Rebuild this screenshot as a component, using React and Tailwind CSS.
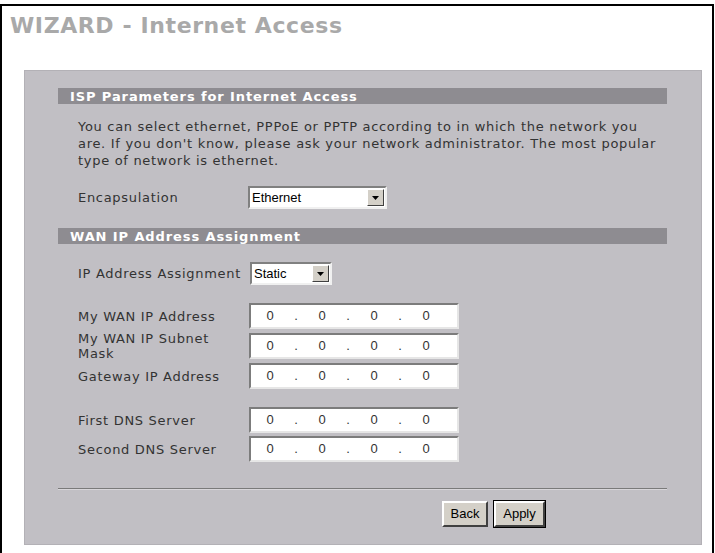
import React from 'react';

const verdana = { fontFamily: '"DejaVu Sans", Verdana, sans-serif' };
const arial = { fontFamily: '"Liberation Sans", Arial, sans-serif' };

function SectionBar({ title }) {
  return (
    <div className="h-[16px] bg-[#8e8c91] pl-[12px] flex items-center text-white font-bold text-[13px] tracking-[0.9px] leading-none">
      {title}
    </div>
  );
}

function FakeSelect({ value, width }) {
  return (
    <div
      className={`${width} h-[23px] bg-white border-2 border-t-[#808080] border-l-[#808080] border-b-[#f0f0f0] border-r-[#f0f0f0] flex items-center justify-between pl-[2px] pr-[1px] tracking-normal`}
      style={arial}
    >
      <span className="text-[13px] text-black leading-none">{value}</span>
      <span className="w-[17px] h-[17px] bg-[#d4d0c8] border border-t-white border-l-white border-b-[#404040] border-r-[#404040] flex items-center justify-center">
        <svg width="7" height="4" viewBox="0 0 7 4">
          <path d="M0 0h7L3.5 4z" fill="#000" />
        </svg>
      </span>
    </div>
  );
}

function IpBox() {
  const cells = ['0', '0', '0', '0'];
  return (
    <div
      className="w-[210px] h-[26px] bg-white border-2 border-t-[#7c7c7c] border-l-[#7c7c7c] border-b-[#e6e6e6] border-r-[#e6e6e6] flex items-center text-[13px] text-[#333] tracking-normal"
      style={arial}
    >
      {cells.map((c, i) => (
        <React.Fragment key={i}>
          <span className="w-[38px] text-center">{c}</span>
          {i < 3 && <span className="w-[14px] text-center">.</span>}
        </React.Fragment>
      ))}
    </div>
  );
}

function IpRow({ children }) {
  return (
    <div className="flex items-center h-[26px]">
      <div className="w-[191px] pl-[20px] pr-[4px] leading-[15px] whitespace-nowrap">{children}</div>
      <IpBox />
    </div>
  );
}

export default function App() {
  return (
    <div className="w-[715px] h-[553px] bg-white overflow-hidden" style={verdana}>
      <div className="mt-[4px] w-[714px] h-[549px] border-2 border-b-0 border-black">
        <h1 className="pl-[8px] pt-[6px] h-[64px] text-[22px] font-bold text-[#a9a9a9] tracking-[0.6px] leading-[28px]">
          WIZARD - Internet Access
        </h1>

        <div className="ml-[22px] w-[678px] h-[475px] bg-[#c1bfc4] border border-[#b3b1b6] pt-[17px] pl-[33px] text-[13px] tracking-[0.7px] text-[#333]">
          <div className="w-[609px]">
            <SectionBar title="ISP Parameters for Internet Access" />

            <p className="pl-[20px] mt-[14px] leading-[17px] whitespace-nowrap">
              You can select ethernet, PPPoE or PPTP according to in which the network you
              <br />
              are. If you don't know, please ask your network administrator. The most popular
              <br />
              type of network is ethernet.
            </p>

            <div className="flex items-center mt-[17px]">
              <div className="w-[190px] pl-[20px]">Encapsulation</div>
              <FakeSelect value="Ethernet" width="w-[139px]" />
            </div>

            <div className="mt-[19px]">
              <SectionBar title="WAN IP Address Assignment" />
            </div>

            <div className="flex items-center mt-[18px]">
              <div className="w-[192px] pl-[20px] pr-[2px] whitespace-nowrap">IP Address Assignment</div>
              <FakeSelect value="Static" width="w-[82px]" />
            </div>

            <div className="flex flex-col gap-[4px] mt-[18px]">
              <IpRow>My WAN IP Address</IpRow>
              <IpRow>
                My WAN IP Subnet
                <br />
                Mask
              </IpRow>
              <IpRow>Gateway IP Address</IpRow>
            </div>

            <div className="flex flex-col gap-[3px] mt-[18px]">
              <IpRow>First DNS Server</IpRow>
              <IpRow>Second DNS Server</IpRow>
            </div>

            <div className="mt-[26px] h-[2px] border-t border-t-[#7a7a7a] border-b border-b-[#d8d6da]" />

            <div
              className="flex items-center gap-[5px] pl-[384px] mt-[10px] text-[13px] text-black tracking-normal"
              style={arial}
            >
              <button className="w-[46px] h-[26px] bg-[#d4d0c8] border-2 border-t-white border-l-white border-b-[#404040] border-r-[#404040]">
                Back
              </button>
              <div className="border border-black">
                <button className="w-[51px] h-[26px] bg-[#d4d0c8] border-2 border-t-white border-l-white border-b-[#404040] border-r-[#404040]">
                  Apply
                </button>
              </div>
            </div>
          </div>
        </div>
      </div>
    </div>
  );
}
